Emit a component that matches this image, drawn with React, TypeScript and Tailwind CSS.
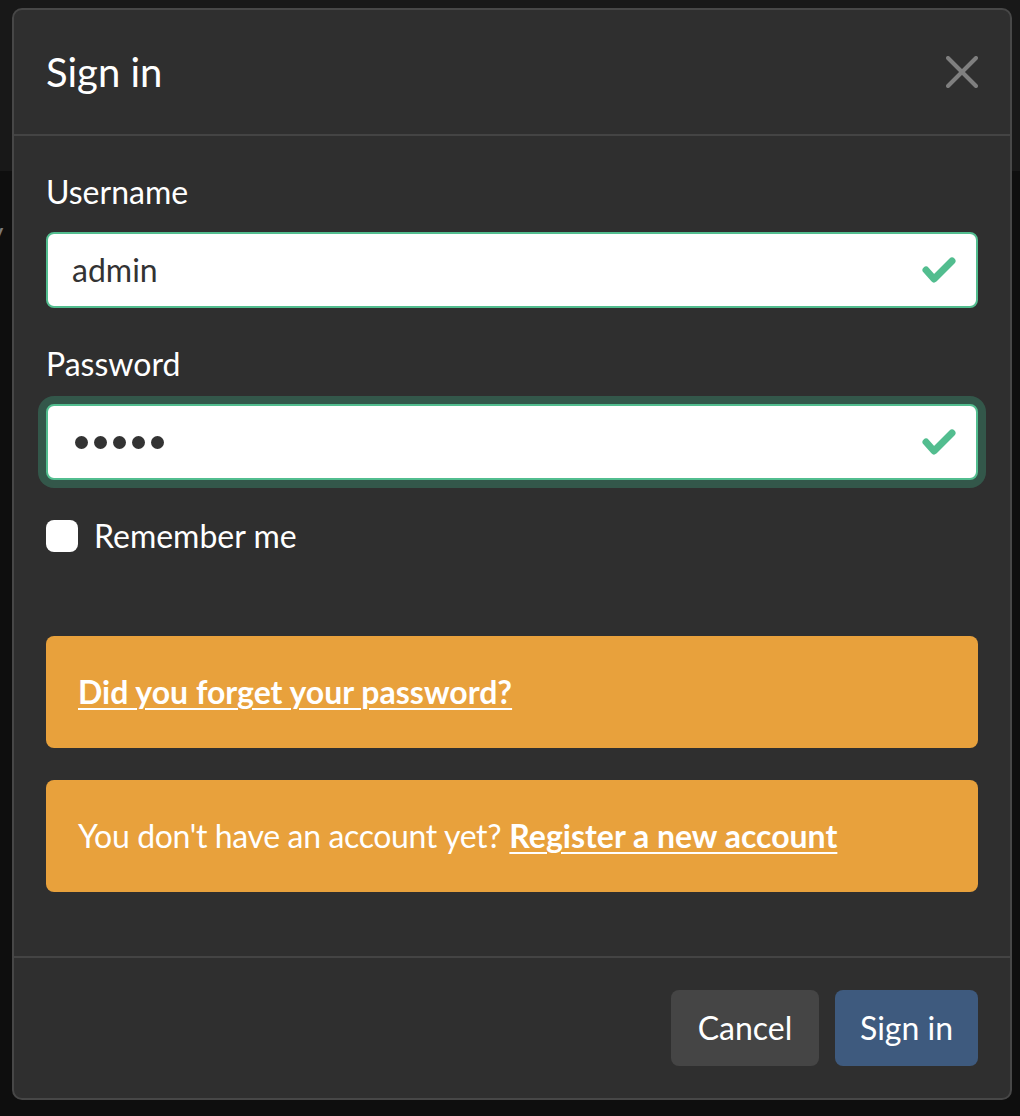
import React from "react";

function Check() {
  return (
    <svg width="34" height="27" viewBox="0 0 34 27" className="shrink-0">
      <polyline points="4,13 12,22 30,4" fill="none" stroke="#52bd8f" strokeWidth="7" strokeLinecap="round" strokeLinejoin="round" />
    </svg>
  );
}

export default function App() {
  return (
    <div className="relative w-[1020px] h-[1116px] overflow-hidden bg-[#0e0e0e] font-['Lato','Noto_Sans',sans-serif]">
      <div className="h-[171px] bg-[#181818]" />
      <span className="absolute left-[-12px] top-[212px] text-[30px] leading-[40px] text-[#7a7a7a]">y</span>

      <div className="absolute left-[12px] top-[8px] w-[1000px] rounded-[10px] border-2 border-[#474747] bg-[#2f2f2f]">
        {/* header */}
        <div className="flex items-center justify-between border-b-2 border-[#444444] px-[32px] py-[32px]">
          <h5 className="text-[40px] leading-[60px] font-normal text-white">Sign in</h5>
          <button className="flex h-[32px] w-[32px] items-center justify-center">
            <svg width="32" height="32" viewBox="0 0 32 32">
              <line x1="2" y1="2" x2="30" y2="30" stroke="#7f7f7f" strokeWidth="4" strokeLinecap="round" />
              <line x1="30" y1="2" x2="2" y2="30" stroke="#7f7f7f" strokeWidth="4" strokeLinecap="round" />
            </svg>
          </button>
        </div>

        {/* body */}
        <div className="px-[32px] pt-[32px] pb-[64px]">
          <div className="mb-[32px]">
            <label className="mb-[16px] block text-[32px] leading-[48px] text-white">Username</label>
            <div className="flex h-[76px] items-center rounded-[8px] border-2 border-[#52bd8f] bg-white pl-[24px] pr-[20px]">
              <input
                type="text"
                defaultValue="admin"
                className="min-w-0 flex-1 bg-transparent text-[32px] leading-[48px] text-[#333333] outline-none"
              />
              <Check />
            </div>
          </div>

          <div className="mb-[32px]">
            <label className="mb-[16px] block text-[32px] leading-[48px] text-white">Password</label>
            <div className="flex h-[76px] items-center rounded-[8px] border-2 border-[#52bd8f] bg-white pl-[24px] pr-[20px] shadow-[0_0_0_8px_#33574a]">
              <div className="flex flex-1 items-center gap-[6px] pl-[3px]">
                {[0, 1, 2, 3, 4].map((i) => (
                  <span key={i} className="block h-[13px] w-[13px] rounded-full bg-[#333333]" />
                ))}
              </div>
              <Check />
            </div>
          </div>

          <div className="flex h-[48px] items-center">
            <span className="block h-[32px] w-[32px] rounded-[8px] bg-white" />
            <span className="ml-[16px] text-[32px] leading-[48px] text-white">Remember me</span>
          </div>

          <div className="mt-[76px] rounded-[8px] bg-[#e8a13c] p-[32px] text-[32px] leading-[48px] text-white">
            <a className="font-bold underline decoration-2 underline-offset-[4px]">Did you forget your password?</a>
          </div>

          <div className="mt-[32px] rounded-[8px] bg-[#e8a13c] p-[32px] text-[32px] leading-[48px] text-white">
            <span className="tracking-[-0.36px]">You don't have an account yet?</span>{" "}
            <a className="font-bold underline decoration-2 underline-offset-[4px]">Register a new account</a>
          </div>
        </div>

        {/* footer */}
        <div className="flex justify-end gap-[16px] border-t-2 border-[#444444] px-[32px] py-[32px]">
          <button className="h-[76px] w-[148px] rounded-[8px] bg-[#454545] text-[32px] leading-[48px] text-white">Cancel</button>
          <button className="h-[76px] w-[143px] rounded-[8px] bg-[#3e5a7e] text-[32px] leading-[48px] text-white">Sign in</button>
        </div>
      </div>
    </div>
  );
}
